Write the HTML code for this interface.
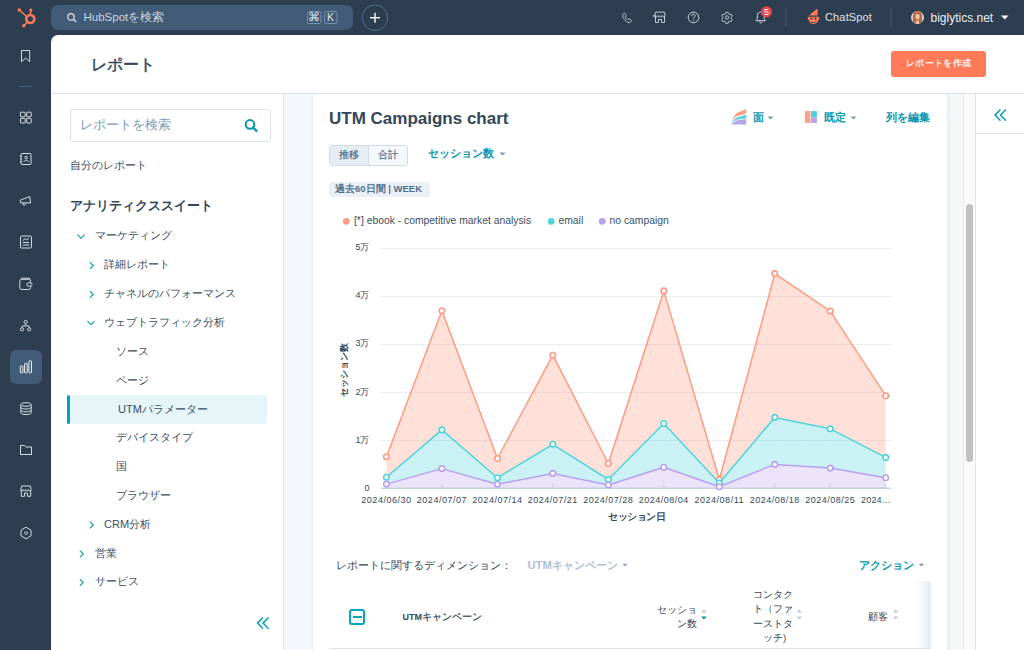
<!DOCTYPE html>
<html><head><meta charset="utf-8">
<style>
*{box-sizing:border-box;margin:0;padding:0}
html,body{width:1024px;height:650px;overflow:hidden;background:#2d3e50;font-family:"Liberation Sans",sans-serif;color:#33475b}
.a{position:absolute;white-space:nowrap}
.t{position:absolute;white-space:nowrap;line-height:1}
svg{position:absolute;overflow:visible}
.si path,.si rect,.si circle,.si line,.si polyline,.si ellipse{fill:none;stroke:#d3dbe4;stroke-width:1}
.teal{color:#0a97b1}
.nav{font-size:11px;color:#384d61}
.ylab{font-size:9px;color:#33475b}
.xlab{font-size:9px;color:#33475b;letter-spacing:0.5px}
.th{font-size:9.5px;color:#33475b}
.chev{stroke:#149db6;stroke-width:1.15;fill:none}
</style></head><body>
<!-- ================= TOP BAR ================= -->
<svg style="left:0;top:0" width="1024" height="35">
  <g fill="#ff7a59" stroke="#ff7a59">
    <circle cx="30.3" cy="19" r="4" fill="none" stroke-width="2.6"/>
    <line x1="30.3" y1="15" x2="30.8" y2="10.5" stroke-width="1.6"/>
    <circle cx="30.8" cy="10" r="1.6" stroke="none"/>
    <line x1="27" y1="17" x2="19.5" y2="10" stroke-width="1.4"/>
    <circle cx="19.3" cy="10" r="1.8" stroke="none"/>
    <line x1="27.5" y1="22" x2="24" y2="25.5" stroke-width="1.6"/>
    <circle cx="23.8" cy="25.8" r="1.7" stroke="none"/>
  </g>
</svg>
<div class="a" style="left:51px;top:5px;width:302px;height:25px;background:#425b76;border-radius:7px"></div>
<svg style="left:0;top:0" width="1024" height="35">
  <circle cx="71" cy="16.9" r="3.2" fill="none" stroke="#dfe3eb" stroke-width="1.2"/>
  <line x1="73.4" y1="19.3" x2="76.2" y2="22" stroke="#dfe3eb" stroke-width="1.3"/>
  <rect x="307.5" y="11.5" width="13.5" height="12" rx="2" fill="none" stroke="#7c98b6" stroke-width="0.9"/>
  <rect x="324.5" y="11.5" width="12.5" height="12" rx="2" fill="none" stroke="#7c98b6" stroke-width="0.9"/>
  <circle cx="375" cy="17.7" r="12.8" fill="none" stroke="#516f90" stroke-width="1"/>
  <line x1="370" y1="17.7" x2="380" y2="17.7" stroke="#fff" stroke-width="1.4"/>
  <line x1="375" y1="12.7" x2="375" y2="22.7" stroke="#fff" stroke-width="1.4"/>
</svg>
<div class="t" style="left:83.5px;top:11.5px;font-size:11.5px;color:#cbd6e2">HubSpotを検索</div>
<div class="t" style="left:308.2px;top:11.3px;font-size:12px;color:#dfe3eb">⌘</div>
<div class="t" style="left:327px;top:12px;font-size:10.5px;color:#dfe3eb">K</div>

<!-- right icons -->
<svg style="left:0;top:0" width="1024" height="35" class="si">
  <g transform="translate(627 17.8) scale(0.8) translate(-627 -17.8)" style="stroke-width:1.25"><!-- phone -->
  <path d="M622.5 12.5c0.8-0.8 1.8-0.6 2.3 0.3l0.9 1.6c0.4 0.7 0.2 1.4-0.4 1.9l-0.6 0.4c0.6 1.6 1.8 2.9 3.3 3.6l0.5-0.6c0.5-0.6 1.3-0.7 1.9-0.3l1.5 1c0.8 0.5 0.9 1.5 0.2 2.2l-0.6 0.6c-1 1-2.8 0.9-4.8-0.4c-2.200-1.500-3.900-3.600-4.800-5.900c-0.600-1.700-0.400-3.300 0.600-4.400z"/>
  </g>
  <g transform="translate(660 17.5) scale(0.9) translate(-660 -17.5)" style="stroke-width:1.11"><!-- store -->
  <path d="M655 15.5v7.5h3.3v-3.3h3.4v3.3h3.3v-7.5"/>
  <path d="M654.2 15.3l1-3.8h9.6l1 3.8c0 1-0.9 1.6-1.8 1.6s-1.7-0.6-1.7-1.6c0 1-0.8 1.6-1.7 1.6s-1.7-0.6-1.7-1.6c0 1-0.8 1.6-1.700 1.6s-1.700-0.6-1.700-1.6c0 1-0.800 1.600-1.700 1.600s-1.200-0.600-1.200-1.600z"/>
  </g>
  <g transform="translate(693.5 17.5) scale(0.95) translate(-693.5 -17.5)" style="stroke-width:1.05"><!-- help -->
  <circle cx="693.5" cy="17.5" r="5.6"/>
  <path d="M691.7 16c0-1.1 0.8-1.9 1.8-1.900s1.800 0.700 1.800 1.600c0 1.300-1.800 1.400-1.800 2.800"/>
  <circle cx="693.5" cy="20.6" r="0.3" style="fill:#d3dbe4"/>
  </g>
  <g transform="translate(727 17.5) scale(0.85) translate(-727 -17.5)" style="stroke-width:1.18"><!-- gear -->
  <circle cx="727" cy="17.5" r="2"/>
  <path d="M725.6 11.5h2.8l0.4 1.7l1.4 0.8l1.7-0.5l1.4 2.4l-1.3 1.2v1.6l1.3 1.2l-1.4 2.4l-1.7-0.5l-1.4 0.8l-0.4 1.7h-2.8l-0.4-1.7l-1.4-0.8l-1.7 0.5l-1.4-2.4l1.3-1.2v-1.6l-1.3-1.2l1.4-2.4l1.7 0.5l1.4-0.8z"/>
  </g>
<g transform="translate(0 -0.8)">  <!-- bell -->
  <path d="M756 21.5h9.5c-1-1-1.400-2-1.400-3.500v-1.800c0-1.900-1.500-3.400-3.400-3.400s-3.300 1.500-3.300 3.400v1.800c0 1.500-0.400 2.500-1.400 3.500z"/>
  <path d="M759.3 22.500c0.300 0.800 0.800 1.200 1.500 1.200s1.200-0.400 1.500-1.200"/>
</g>
  <line x1="786" y1="8" x2="786" y2="27" style="stroke:#425b76;stroke-width:1"/>
  <line x1="891" y1="8" x2="891" y2="27" style="stroke:#425b76;stroke-width:1"/>
</svg>
<svg style="left:0;top:0" width="1024" height="35">
  <circle cx="766.4" cy="11.9" r="5.6" fill="#e5464f"/>
  <path d="M1001 15.5h7.5l-3.75 4z" fill="#fff"/>
  <!-- chatspot -->
  <g fill="#ff7a59">
    <path d="M809 15.2l1.6-0.8v-0.8l1.600-0.600v-0.700l1.600-0.600v-0.700l1.600-0.600v-0.600l1.700-0.800l0.500-0.100v6.500h-8.600z"/>
    <path d="M808.500 16.800h9.800c0.300 0 1 0.600 1 1.700s-0.700 1.700-1.200 1.700c-0.500 2.300-2.200 3.900-4.600 3.900s-4.100-1.600-4.600-3.900c-0.500 0-1.200-0.600-1.200-1.700s0.600-1.700 0.800-1.700z"/>
  </g>
  <circle cx="811.300" cy="18.600" r="1.100" fill="#2d3e50"/>
  <circle cx="815.500" cy="18.600" r="1.100" fill="#2d3e50"/>
  <path d="M811 21.700c0.800 1.200 4 1.200 4.800 0" stroke="#2d3e50" stroke-width="1" fill="none"/>
  <circle cx="813.400" cy="21.300" r="0.900" fill="#ff9b7f"/>
  <!-- avatar -->
  <clipPath id="av"><circle cx="917.5" cy="17.5" r="6.4"/></clipPath>
  <g clip-path="url(#av)">
    <rect x="910" y="10" width="15" height="15" fill="#ebe8e4"/>
    <path d="M912.800 25v-8.500c0-3.300 2-5.500 4.700-5.500s4.700 2.200 4.700 5.500v8.500z" fill="#b66a44"/>
    <ellipse cx="917.500" cy="16.600" rx="2.200" ry="2.900" fill="#eac0a3"/>
    <path d="M915.600 25l0.800-4.500h2.200l0.800 4.500z" fill="#e9c8b6"/>
  </g>
</svg>
<div class="t" style="left:763.9px;top:8.2px;font-size:9px;color:#fff">5</div>
<div class="t" style="left:825px;top:12px;font-size:11px;color:#dfe3eb;letter-spacing:0.15px">ChatSpot</div>
<div class="t" style="left:930.5px;top:11.5px;font-size:12px;color:#eaf0f6">biglytics.net</div>

<!-- ================= SIDEBAR ================= -->
<div class="a" style="left:10px;top:350px;width:32px;height:34px;background:#425b76;border-radius:6px"></div>
<svg style="left:0;top:35px" width="51" height="615" class="si" viewBox="0 35 51 615">
  <!-- bookmark -->
  <path d="M21.500 50.500h8.200v11.300l-4.100-3.800l-4.100 3.800z"/>
  <line x1="19" y1="86.5" x2="32" y2="86.5" style="stroke:#425b76;stroke-width:1.2"/>
  <!-- grid -->
  <rect x="20.5" y="112.2" width="4.6" height="4.6" rx="0.5"/>
  <rect x="26.6" y="112.2" width="4.6" height="4.6" rx="0.5"/>
  <rect x="20.5" y="118.4" width="4.6" height="4.6" rx="0.5"/>
  <rect x="26.6" y="118.4" width="4.6" height="4.6" rx="0.5"/>
  <!-- contacts -->
  <rect x="21" y="153.5" width="10" height="11" rx="1"/>
  <circle cx="26.2" cy="157.5" r="1.3"/>
  <path d="M23.8 162c0.3-1.2 1.2-1.800 2.400-1.800s2.100 0.600 2.400 1.800"/>
  <line x1="20" y1="156" x2="22" y2="156"/>
  <line x1="20" y1="159" x2="22" y2="159"/>
  <line x1="20" y1="162" x2="22" y2="162"/>
  <!-- megaphone -->
  <path d="M20.2 200.200L29.800 196.600L30.600 202.900L20.600 202.900Z"/>
  <path d="M22.600 203l1.300 2.400l2.600-2.400"/>
  <!-- doc -->
  <rect x="20.5" y="236" width="11" height="12" rx="1.2"/>
  <line x1="22.8" y1="242.5" x2="29.2" y2="242.5"/>
  <line x1="22.8" y1="245" x2="29.2" y2="245"/>
  <path d="M22.8 240.5l2.200-1.800l1.600 1.100l2.600-1.600"/>
  <!-- wallet -->
  <rect x="19.8" y="279.3" width="10.8" height="10.2" rx="2"/>
  <path d="M20.600 279.300c0.200-0.700 0.800-1.100 1.600-1.100h6.600c0.800 0 1.400 0.500 1.500 1.100"/>
  <rect x="26.8" y="282.900" width="5.200" height="3.200" rx="1.500" style="fill:#2d3e50"/>
  <!-- network -->
  <circle cx="25.6" cy="322" r="1.6"/>
  <circle cx="22" cy="329.300" r="1.6"/>
  <circle cx="29.200" cy="329.300" r="1.6"/>
  <path d="M25.600 323.600v2.300M22 327.700v-1.300c0-0.300 0.200-0.500 0.500-0.500h6.200c0.300 0 0.500 0.200 0.500 0.500v1.300"/>
  <!-- chart -->
  <rect x="20.3" y="366" width="2.6" height="6.8" rx="0.6" style="stroke:#eaf0f6"/>
  <rect x="24.6" y="363.3" width="2.6" height="9.5" rx="0.6" style="stroke:#eaf0f6"/>
  <rect x="28.9" y="360.8" width="2.6" height="12" rx="0.6" style="stroke:#eaf0f6"/>
  <!-- database -->
  <ellipse cx="26" cy="404.5" rx="5.2" ry="1.8"/>
  <path d="M20.8 404.5v8.300c0 1 2.300 1.800 5.200 1.800s5.200-0.800 5.200-1.800v-8.300"/>
  <path d="M20.8 407.3c0 1 2.300 1.800 5.200 1.800s5.200-0.800 5.200-1.800M20.8 410.100c0 1 2.300 1.800 5.200 1.800s5.200-0.800 5.200-1.800"/>
  <!-- folder -->
  <path d="M20.5 445.5h4.200l1.300 1.500h5.500v7.5h-11z"/>
  <!-- store -->
  <path d="M21.3 490v6.300h3.200v-3.300h3v3.300h3.200v-6.300"/>
  <path d="M20.8 489.5l0.900-3.500h8.600l0.900 3.500c0 0.900-0.700 1.400-1.400 1.400s-1.400-0.500-1.400-1.400c0 0.900-0.700 1.400-1.400 1.400s-1.400-0.500-1.400-1.400c0 0.900-0.700 1.400-1.400 1.400s-1.400-0.500-1.400-1.400c0 0.900-0.700 1.400-1.400 1.400s-1-0.500-1-1.400z"/>
  <!-- hexagon -->
  <path d="M26 527.2l5 2.900v5.800l-5 2.900l-5-2.900v-5.800z"/>
  <path d="M26 531.3l1.700 1.700l-1.700 1.700l-1.700-1.700z"/>
</svg>

<!-- ================= MAIN ================= -->
<div class="a" style="left:51px;top:35px;width:973px;height:615px;background:#fff;border-top-left-radius:7px;overflow:hidden">
</div>
<div class="t" style="left:90.5px;top:56.8px;font-size:15.5px;color:#33475b;-webkit-text-stroke:0.45px #33475b">レポート</div>
<div class="a" style="left:891px;top:51px;width:95px;height:26px;background:#ff7a59;border-radius:3px"></div>
<div class="t" style="left:906px;top:58.3px;font-size:9.4px;letter-spacing:0.35px;color:#fff;-webkit-text-stroke:0.2px #fff">レポートを作成</div>
<div class="a" style="left:51px;top:93px;width:973px;height:1px;background:#dfe3eb"></div>

<!-- left panel border and gray columns -->
<div class="a" style="left:283px;top:94px;width:1px;height:556px;background:#dfe3eb"></div>
<div class="a" style="left:284px;top:94px;width:29px;height:556px;background:linear-gradient(90deg,#f5f8fa 0,#f5f8fa 26px,#eaedf2 29px)"></div>
<div class="a" style="left:947px;top:94px;width:16px;height:556px;background:linear-gradient(90deg,#e8ebf0 0,#eef1f5 2px,#f5f8fa 4px)"></div>
<div class="a" style="left:963px;top:94px;width:1px;height:556px;background:#e8e8e8"></div>
<div class="a" style="left:964px;top:94px;width:11px;height:556px;background:#fafafa"></div>
<div class="a" style="left:966px;top:204px;width:7px;height:258px;background:#c1c1c1;border-radius:4px"></div>
<div class="a" style="left:975px;top:94px;width:1px;height:556px;background:#dfe3eb"></div>
<div class="a" style="left:976px;top:133px;width:48px;height:1px;background:#dfe3eb"></div>
<svg style="left:0;top:0" width="1024" height="650">
  <path d="M1000.5 109.5l-5.500 5.600l5.500 5.600M1006 109.5l-5.500 5.600l5.500 5.600" fill="none" stroke="#0b9fb5" stroke-width="1.5"/>
</svg>



<!-- ================= CHART CARD ================= -->
<div class="t" style="left:329px;top:109.6px;font-size:17px;font-weight:bold;color:#33475b">UTM Campaigns chart</div>
<svg style="left:0;top:0" width="1024" height="650">
  <path d="M730.8 122.4L736.2 113.2L746.2 109V113.6L736.2 116.6Z" fill="#ff9f86"/>
  <path d="M731 123.6L736.2 117.8L746.2 114.8V118.2L736.5 119.8Z" fill="#4fd1d8"/>
  <path d="M731 124.6L736.5 120.6L746.2 119V124.6Z" fill="#b9a4e8"/>
  <rect x="804.9" y="111.1" width="5.4" height="11.9" fill="#ff9f86"/>
  <rect x="810.9" y="111.1" width="6" height="6.1" fill="#4fd1d8"/>
  <rect x="810.9" y="117.2" width="6" height="5.8" fill="#b9a4e8"/>
  <path d="M767.500 116.500h6l-3 3z" fill="#7c98b6"/>
  <path d="M850.500 116.500h6l-3 3z" fill="#7c98b6"/>
  <path d="M499.500 152.500h6l-3 3z" fill="#7c98b6"/>
</svg>
<div class="t teal" style="left:752.5px;top:112px;font-size:11px;font-weight:bold">面</div>
<div class="t teal" style="left:823.5px;top:112px;font-size:11px;font-weight:bold">既定</div>
<div class="t teal" style="left:886px;top:112px;font-size:11px;font-weight:bold">列を編集</div>

<div class="a" style="left:329px;top:144.5px;width:79px;height:21px;border:1px solid #d3dce6;border-radius:3px;background:#f5f8fa;overflow:hidden">
  <div class="a" style="left:0;top:0;width:39px;height:19px;background:#e6ecf3;border-right:1px solid #d3dce6"></div>
</div>
<div class="t" style="left:339px;top:149.5px;font-size:10px;color:#4a6582;-webkit-text-stroke:0.2px #4a6582">推移</div>
<div class="t" style="left:378px;top:149.5px;font-size:10px;color:#4a6582;-webkit-text-stroke:0.15px #4a6582">合計</div>
<div class="t teal" style="left:427.5px;top:147.6px;font-size:10.7px;font-weight:bold">セッション数</div>

<div class="a" style="left:329px;top:181.8px;width:101px;height:15.2px;background:#eaf0f6;border-radius:3px"></div>
<div class="t" style="left:335px;top:184px;font-size:9.5px;font-weight:bold;color:#516f90">過去60日間 | WEEK</div>

<svg style="left:0;top:0" width="1024" height="650">
  <circle cx="346.3" cy="221.3" r="3.4" fill="#ff9b83"/>
  <circle cx="551.2" cy="221.3" r="3.4" fill="#51d3d9"/>
  <circle cx="602.2" cy="221.3" r="3.4" fill="#b9a1ee"/>
</svg>
<div class="t" style="left:354px;top:216px;font-size:10.35px;color:#3b5064">[*] ebook - competitive market analysis</div>
<div class="t" style="left:558.5px;top:216px;font-size:10.35px;color:#3b5064">email</div>
<div class="t" style="left:609.5px;top:216px;font-size:10.35px;color:#3b5064">no campaign</div>
<svg style="left:0;top:0" width="1024" height="650">
<line x1="381.5" y1="440.5" x2="891" y2="440.5" stroke="#dfe4ea" stroke-width="1" stroke-dasharray="2,1"/>
<line x1="381.5" y1="392.5" x2="891" y2="392.5" stroke="#dfe4ea" stroke-width="1" stroke-dasharray="2,1"/>
<line x1="381.5" y1="344.5" x2="891" y2="344.5" stroke="#dfe4ea" stroke-width="1" stroke-dasharray="2,1"/>
<line x1="381.5" y1="296.5" x2="891" y2="296.5" stroke="#dfe4ea" stroke-width="1" stroke-dasharray="2,1"/>
<line x1="381.5" y1="248.5" x2="891" y2="248.5" stroke="#dfe4ea" stroke-width="1" stroke-dasharray="2,1"/>
<path d="M386.4,456.8 L441.9,310.8 L497.4,458.5 L552.8,355.2 L608.3,463.5 L663.8,290.9 L719.3,479.7 L774.8,273.6 L830.2,311.1 L885.7,395.7 L885.7,457.4 L830.2,428.8 L774.8,417.4 L719.3,483.0 L663.8,423.5 L608.3,479.5 L552.8,444.3 L497.4,477.7 L441.9,429.9 L386.4,477.2Z" fill="#ff9b83" fill-opacity="0.3"/>
<path d="M386.4,477.2 L441.9,429.9 L497.4,477.7 L552.8,444.3 L608.3,479.5 L663.8,423.5 L719.3,483.0 L774.8,417.4 L830.2,428.8 L885.7,457.4 L885.7,477.8 L830.2,468.1 L774.8,464.4 L719.3,486.8 L663.8,467.2 L608.3,485.0 L552.8,473.4 L497.4,484.3 L441.9,468.6 L386.4,484.1Z" fill="#51d3d9" fill-opacity="0.3"/>
<path d="M386.4,484.1 L441.9,468.6 L497.4,484.3 L552.8,473.4 L608.3,485.0 L663.8,467.2 L719.3,486.8 L774.8,464.4 L830.2,468.1 L885.7,477.8 L885.7,488.2 L830.2,488.2 L774.8,488.2 L719.3,488.2 L663.8,488.2 L608.3,488.2 L552.8,488.2 L497.4,488.2 L441.9,488.2 L386.4,488.2Z" fill="#b9a1ee" fill-opacity="0.3"/>
<line x1="381.4" y1="488.2" x2="890.8" y2="488.2" stroke="#c5d1dd" stroke-width="1.6"/>
<line x1="386.4" y1="483.7" x2="386.4" y2="488.2" stroke="#c5d1dd" stroke-width="1"/>
<line x1="441.9" y1="483.7" x2="441.9" y2="488.2" stroke="#c5d1dd" stroke-width="1"/>
<line x1="497.4" y1="483.7" x2="497.4" y2="488.2" stroke="#c5d1dd" stroke-width="1"/>
<line x1="552.8" y1="483.7" x2="552.8" y2="488.2" stroke="#c5d1dd" stroke-width="1"/>
<line x1="608.3" y1="483.7" x2="608.3" y2="488.2" stroke="#c5d1dd" stroke-width="1"/>
<line x1="663.8" y1="483.7" x2="663.8" y2="488.2" stroke="#c5d1dd" stroke-width="1"/>
<line x1="719.3" y1="483.7" x2="719.3" y2="488.2" stroke="#c5d1dd" stroke-width="1"/>
<line x1="774.8" y1="483.7" x2="774.8" y2="488.2" stroke="#c5d1dd" stroke-width="1"/>
<line x1="830.2" y1="483.7" x2="830.2" y2="488.2" stroke="#c5d1dd" stroke-width="1"/>
<line x1="885.7" y1="483.7" x2="885.7" y2="488.2" stroke="#c5d1dd" stroke-width="1"/>
<polyline points="386.4,456.8 441.9,310.8 497.4,458.5 552.8,355.2 608.3,463.5 663.8,290.9 719.3,479.7 774.8,273.6 830.2,311.1 885.7,395.7" fill="none" stroke="#ff9b83" stroke-width="1.5" stroke-linejoin="round"/>
<circle cx="386.4" cy="456.8" r="2.75" fill="#fff" stroke="#ff9b83" stroke-width="1.6"/>
<circle cx="441.9" cy="310.8" r="2.75" fill="#fff" stroke="#ff9b83" stroke-width="1.6"/>
<circle cx="497.4" cy="458.5" r="2.75" fill="#fff" stroke="#ff9b83" stroke-width="1.6"/>
<circle cx="552.8" cy="355.2" r="2.75" fill="#fff" stroke="#ff9b83" stroke-width="1.6"/>
<circle cx="608.3" cy="463.5" r="2.75" fill="#fff" stroke="#ff9b83" stroke-width="1.6"/>
<circle cx="663.8" cy="290.9" r="2.75" fill="#fff" stroke="#ff9b83" stroke-width="1.6"/>
<circle cx="719.3" cy="479.7" r="2.75" fill="#fff" stroke="#ff9b83" stroke-width="1.6"/>
<circle cx="774.8" cy="273.6" r="2.75" fill="#fff" stroke="#ff9b83" stroke-width="1.6"/>
<circle cx="830.2" cy="311.1" r="2.75" fill="#fff" stroke="#ff9b83" stroke-width="1.6"/>
<circle cx="885.7" cy="395.7" r="2.75" fill="#fff" stroke="#ff9b83" stroke-width="1.6"/>
<polyline points="386.4,477.2 441.9,429.9 497.4,477.7 552.8,444.3 608.3,479.5 663.8,423.5 719.3,483.0 774.8,417.4 830.2,428.8 885.7,457.4" fill="none" stroke="#51d3d9" stroke-width="1.5" stroke-linejoin="round"/>
<circle cx="386.4" cy="477.2" r="2.75" fill="#fff" stroke="#51d3d9" stroke-width="1.6"/>
<circle cx="441.9" cy="429.9" r="2.75" fill="#fff" stroke="#51d3d9" stroke-width="1.6"/>
<circle cx="497.4" cy="477.7" r="2.75" fill="#fff" stroke="#51d3d9" stroke-width="1.6"/>
<circle cx="552.8" cy="444.3" r="2.75" fill="#fff" stroke="#51d3d9" stroke-width="1.6"/>
<circle cx="608.3" cy="479.5" r="2.75" fill="#fff" stroke="#51d3d9" stroke-width="1.6"/>
<circle cx="663.8" cy="423.5" r="2.75" fill="#fff" stroke="#51d3d9" stroke-width="1.6"/>
<circle cx="719.3" cy="483.0" r="2.75" fill="#fff" stroke="#51d3d9" stroke-width="1.6"/>
<circle cx="774.8" cy="417.4" r="2.75" fill="#fff" stroke="#51d3d9" stroke-width="1.6"/>
<circle cx="830.2" cy="428.8" r="2.75" fill="#fff" stroke="#51d3d9" stroke-width="1.6"/>
<circle cx="885.7" cy="457.4" r="2.75" fill="#fff" stroke="#51d3d9" stroke-width="1.6"/>
<polyline points="386.4,484.1 441.9,468.6 497.4,484.3 552.8,473.4 608.3,485.0 663.8,467.2 719.3,486.8 774.8,464.4 830.2,468.1 885.7,477.8" fill="none" stroke="#b9a1ee" stroke-width="1.5" stroke-linejoin="round"/>
<circle cx="386.4" cy="484.1" r="2.75" fill="#fff" stroke="#b9a1ee" stroke-width="1.6"/>
<circle cx="441.9" cy="468.6" r="2.75" fill="#fff" stroke="#b9a1ee" stroke-width="1.6"/>
<circle cx="497.4" cy="484.3" r="2.75" fill="#fff" stroke="#b9a1ee" stroke-width="1.6"/>
<circle cx="552.8" cy="473.4" r="2.75" fill="#fff" stroke="#b9a1ee" stroke-width="1.6"/>
<circle cx="608.3" cy="485.0" r="2.75" fill="#fff" stroke="#b9a1ee" stroke-width="1.6"/>
<circle cx="663.8" cy="467.2" r="2.75" fill="#fff" stroke="#b9a1ee" stroke-width="1.6"/>
<circle cx="719.3" cy="486.8" r="2.75" fill="#fff" stroke="#b9a1ee" stroke-width="1.6"/>
<circle cx="774.8" cy="464.4" r="2.75" fill="#fff" stroke="#b9a1ee" stroke-width="1.6"/>
<circle cx="830.2" cy="468.1" r="2.75" fill="#fff" stroke="#b9a1ee" stroke-width="1.6"/>
<circle cx="885.7" cy="477.8" r="2.75" fill="#fff" stroke="#b9a1ee" stroke-width="1.6"/>
</svg>
<div class="t ylab" style="left:319.5px;top:242.9px;width:50px;text-align:right">5万</div>
<div class="t ylab" style="left:319.5px;top:291.1px;width:50px;text-align:right">4万</div>
<div class="t ylab" style="left:319.5px;top:339.3px;width:50px;text-align:right">3万</div>
<div class="t ylab" style="left:319.5px;top:387.5px;width:50px;text-align:right">2万</div>
<div class="t ylab" style="left:319.5px;top:435.7px;width:50px;text-align:right">1万</div>
<div class="t ylab" style="left:319.5px;top:483.9px;width:50px;text-align:right">0</div>
<div class="t xlab" style="left:346.4px;top:495.5px;width:80px;text-align:center">2024/06/30</div>
<div class="t xlab" style="left:401.9px;top:495.5px;width:80px;text-align:center">2024/07/07</div>
<div class="t xlab" style="left:457.4px;top:495.5px;width:80px;text-align:center">2024/07/14</div>
<div class="t xlab" style="left:512.8px;top:495.5px;width:80px;text-align:center">2024/07/21</div>
<div class="t xlab" style="left:568.3px;top:495.5px;width:80px;text-align:center">2024/07/28</div>
<div class="t xlab" style="left:623.8px;top:495.5px;width:80px;text-align:center">2024/08/04</div>
<div class="t xlab" style="left:679.3px;top:495.5px;width:80px;text-align:center">2024/08/11</div>
<div class="t xlab" style="left:734.8px;top:495.5px;width:80px;text-align:center">2024/08/18</div>
<div class="t xlab" style="left:790.2px;top:495.5px;width:80px;text-align:center">2024/08/25</div>
<div class="t xlab" style="left:861px;top:495.5px;letter-spacing:0.2px">2024…</div>
<div class="t" style="font-size:9.3px;font-weight:bold;color:#33475b;transform:rotate(-90deg);transform-origin:0 0;left:339.8px;top:396.5px">セッション数</div>
<div class="t" style="left:608px;top:511.6px;font-size:9.6px;letter-spacing:-0.4px;font-weight:bold;color:#33475b">セッション日</div>

<!-- dimension row -->
<div class="t" style="left:336px;top:559.5px;font-size:10.5px;color:#33475b">レポートに関するディメンション：</div>
<div class="t" style="left:527.5px;top:559.5px;font-size:11.2px;font-weight:bold;color:#b0c1d4">UTMキャンペーン</div>
<svg style="left:0;top:0" width="1024" height="650">
  <path d="M622.200 563.800h5.600l-2.800 2.800z" fill="#8fa6bf"/>
  <path d="M918.700 563.800h5.600l-2.800 2.800z" fill="#7c98b6"/>
</svg>
<div class="t teal" style="left:858.5px;top:559.5px;font-size:10.6px;font-weight:bold">アクション</div>

<!-- table header -->
<div class="a" style="left:916px;top:581px;width:15px;height:67px;background:linear-gradient(90deg,rgba(234,240,246,0),#e6ecf3)"></div>
<div class="a" style="left:329px;top:647.5px;width:602px;height:1px;background:#dfe3eb"></div>
<div class="a" style="left:349px;top:608.5px;width:16px;height:16px;border:2px solid #00a4bd;border-radius:3px"></div>
<div class="a" style="left:352.5px;top:615.5px;width:9px;height:2.2px;background:#00a4bd"></div>
<div class="t" style="left:402.5px;top:612px;font-size:9px;color:#33475b"><b>UTM</b><span style="font-size:9.6px;-webkit-text-stroke:0.2px #33475b">キャンペーン</span></div>
<div class="t th" style="left:657px;top:604.8px">セッショ</div>
<div class="t th" style="left:677px;top:618.5px">ン数</div>
<div class="t th" style="left:753px;top:589.8px">コンタク</div>
<div class="t th" style="left:753px;top:604.2px">ト（ファ</div>
<div class="t th" style="left:753px;top:618.6px">ーストタ</div>
<div class="t th" style="left:763px;top:633px">ッチ)</div>
<div class="t th" style="left:868px;top:612.3px">顧客</div>
<svg style="left:0;top:0" width="1024" height="650">
  <path d="M701.1 612.6L703.9 609.6L706.7 612.6Z" fill="#b9c8d7"/>
  <path d="M701.1 616.4L703.9 619.4L706.7 616.4Z" fill="#0091ae"/>
  <path d="M796.5 612.6L799.3 609.6L802.1 612.6Z" fill="#bfcbd9"/>
  <path d="M796.5 616.4L799.3 619.4L802.1 616.4Z" fill="#bfcbd9"/>
  <path d="M893.0 612.6L895.8 609.6L898.6 612.6Z" fill="#bfcbd9"/>
  <path d="M893.0 616.4L895.8 619.4L898.6 616.4Z" fill="#bfcbd9"/>
</svg>

<!-- ================= LEFT PANEL ================= -->
<div class="a" style="left:70px;top:109px;width:200.5px;height:33px;background:#fff;border:1px solid #dbe2ea;border-radius:3px"></div>
<div class="t" style="left:80px;top:118.5px;font-size:12.5px;color:#7c98b6">レポートを検索</div>
<svg style="left:0;top:0" width="1024" height="650">
  <circle cx="250" cy="124.4" r="4.3" fill="none" stroke="#0895b0" stroke-width="2"/>
  <line x1="253.2" y1="127.6" x2="256.5" y2="130.9" stroke="#0895b0" stroke-width="2.2" stroke-linecap="round"/>
</svg>
<div class="t nav" style="left:70px;top:160.2px">自分のレポート</div>
<div class="t" style="left:70px;top:200px;font-size:12.5px;font-weight:bold;color:#33475b">アナリティクススイート</div>
<div class="t nav" style="left:95px;top:230.2px">マーケティング</div>
<div class="t nav" style="left:104px;top:259.2px">詳細レポート</div>
<div class="t nav" style="left:104px;top:288.2px">チャネルのパフォーマンス</div>
<div class="t nav" style="left:104px;top:317.2px">ウェブトラフィック分析</div>
<div class="t nav" style="left:116px;top:346.2px">ソース</div>
<div class="t nav" style="left:116px;top:375.2px">ページ</div>
<div class="a" style="left:67px;top:395px;width:200px;height:28.5px;background:#e5f5f8;border-radius:3px"></div>
<div class="a" style="left:67px;top:395px;width:3px;height:28.5px;background:#00a4bd;border-radius:2px"></div>
<div class="t nav" style="left:118px;top:404.2px">UTMパラメーター</div>
<div class="t nav" style="left:116px;top:432.2px">デバイスタイプ</div>
<div class="t nav" style="left:116px;top:461.2px">国</div>
<div class="t nav" style="left:116px;top:490.2px">ブラウザー</div>
<div class="t nav" style="left:104px;top:519.2px">CRM分析</div>
<div class="t nav" style="left:95px;top:548.2px">営業</div>
<div class="t nav" style="left:95px;top:576.2px">サービス</div>
<svg style="left:0;top:0" width="1024" height="650">
  <g class="chev"><path d="M77.5 234.7l3.5 3.5l3.5-3.5"/><path d="M89.9 262.2l3.3 3.3l-3.3 3.3"/><path d="M89.9 291.2l3.3 3.3l-3.3 3.3"/><path d="M87.5 321.2l3.5 3.5l3.5-3.5"/><path d="M89.9 521.7l3.3 3.3l-3.3 3.3"/><path d="M79.9 550.7l3.3 3.3l-3.3 3.3"/><path d="M79.9 579.2l3.3 3.3l-3.3 3.3"/></g>
  <path d="M263 617.500l-5.500 5.600l5.500 5.600M268.500 617.500l-5.500 5.600l5.500 5.600" fill="none" stroke="#0b9fb5" stroke-width="1.5"/>
</svg>

</body></html>
